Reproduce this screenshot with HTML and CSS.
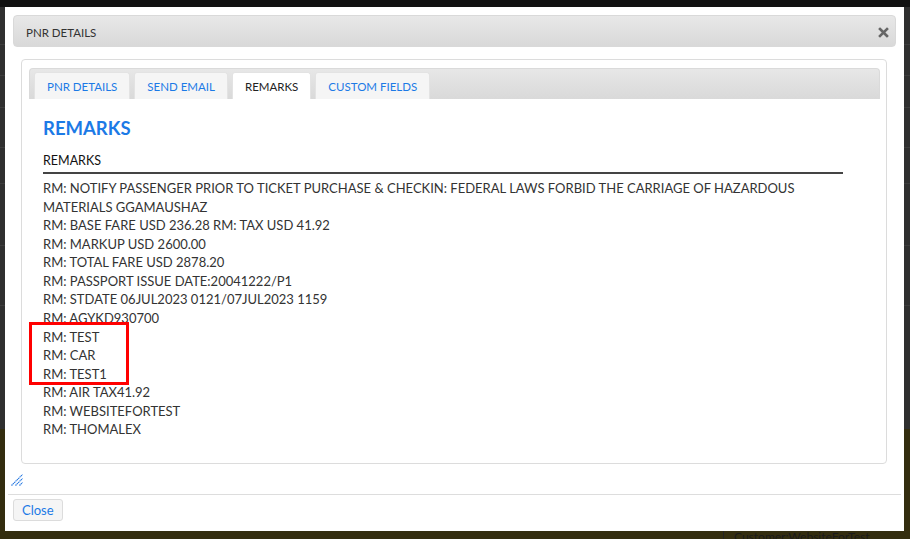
FILE: index.html
```html
<!DOCTYPE html>
<html>
<head>
<meta charset="utf-8">
<title>PNR Details</title>
<link rel="stylesheet" href="styles.css">
</head>
<body>
<div class="backdrop">
  <div class="bd-top"></div>
  <div class="bd-mid">
    <div class="bd-row r1"></div>
    <div class="bd-row r2"></div>
    <div class="bd-row r3"></div>
    <div class="bd-row r4"></div>
    <div class="bd-row r5"></div>
    <div class="bd-row r6"></div>
    <div class="bd-row r7"></div>
    <div class="bd-row r8"></div>
  </div>
  <div class="bd-bottom"><span class="bd-text">Customer:WebsiteForTest</span></div>
</div>

<div class="dialog">
  <div class="titlebar">
    <span class="title">PNR DETAILS</span>
    <svg class="close-x" width="11" height="11" viewBox="0 0 11 11"><path d="M2 2 L9 9 M9 2 L2 9" stroke="#666" stroke-width="2.6" stroke-linecap="square"/></svg>
  </div>

  <div class="content">
    <ul class="tabbar">
      <li class="tab">PNR DETAILS</li>
      <li class="tab">SEND EMAIL</li>
      <li class="tab active">REMARKS</li>
      <li class="tab">CUSTOM FIELDS</li>
    </ul>
    <div class="panel">
      <h3 class="heading">REMARKS</h3>
      <div class="subheading">REMARKS</div>
      <div class="remarks">
        <div>RM: NOTIFY PASSENGER PRIOR TO TICKET PURCHASE &amp; CHECKIN: FEDERAL LAWS FORBID THE CARRIAGE OF HAZARDOUS MATERIALS GGAMAUSHAZ</div>
        <div>RM: BASE FARE USD 236.28 RM: TAX USD 41.92</div>
        <div>RM: MARKUP USD 2600.00</div>
        <div>RM: TOTAL FARE USD 2878.20</div>
        <div>RM: PASSPORT ISSUE DATE:20041222/P1</div>
        <div>RM: STDATE 06JUL2023 0121/07JUL2023 1159</div>
        <div>RM: AGYKD930700</div>
        <div class="highlight">
          <div>RM: TEST</div>
          <div>RM: CAR</div>
          <div>RM: TEST1</div>
        </div>
        <div>RM: AIR TAX41.92</div>
        <div>RM: WEBSITEFORTEST</div>
        <div>RM: THOMALEX</div>
      </div>
    </div>
  </div>

  <div class="resize-row">
    <svg class="resize" width="12" height="12" viewBox="0 0 12 12">
      <path d="M0.5 11.5 L11.5 0.5 M4.5 11.5 L11.5 4.5 M8.5 11.5 L11.5 8.5" stroke="#1f74e0" stroke-width="1.1" stroke-dasharray="1.4 0.5" fill="none"/>
    </svg>
  </div>

  <div class="footer">
    <button class="btn">Close</button>
  </div>
</div>
</body>
</html>
```

FILE: styles.css
```css
html, body {
  margin: 0;
  padding: 0;
}
body {
  width: 910px;
  height: 539px;
  overflow: hidden;
  position: relative;
  font-family: Lato, "Open Sans", "Liberation Sans", sans-serif;
  background: #2f2f2f;
}

/* backdrop */
.backdrop {
  display: flex;
  flex-direction: column;
  height: 539px;
}
.bd-top {
  height: 7px;
  background: #111111;
}
.bd-mid {
  height: 422px;
  background: #2f2f2f;
  display: flex;
  flex-direction: column;
}
.bd-row {
  border-bottom: 1px solid #3d3d3d;
  box-sizing: border-box;
}
.r1 { height: 38px; }
.r2 { height: 31px; }
.r3 { height: 32px; }
.r4 { height: 40px; }
.r5 { height: 36px; }
.r6 { height: 62px; }
.r7 { height: 60px; }
.r8 { height: 83px; border-bottom: none; }
.bd-bottom {
  flex: 1;
  background: #332d0f;
  position: relative;
}
.bd-text {
  position: absolute;
  left: 723px;
  top: 100px;
  font-size: 12px;
  color: #1a1a1a;
  padding-left: 10px;
  border-left: 1px solid #222;
}

/* dialog */
.dialog {
  position: absolute;
  left: 5px;
  top: 7px;
  width: 899px;
  height: 524px;
  background: #fff;
  display: flex;
  flex-direction: column;
  box-sizing: border-box;
}
.titlebar {
  margin: 8px 8px 0 8px;
  height: 32px;
  box-sizing: border-box;
  border: 1px solid #d9d9d9;
  border-radius: 4px;
  background: linear-gradient(#e8e8e8, #d9d9d9);
  display: flex;
  align-items: center;
  justify-content: space-between;
  padding: 2px 6px 0 12px;
}
.title {
  font-size: 11.5px;
  color: #333;
}
.close-x {
  display: block;
}

.content {
  margin: 12px 17px 0 16px;
  height: 405px;
  box-sizing: border-box;
  border: 1px solid #dcdcdc;
  border-radius: 4px;
  padding: 8px 6px 0 7px;
}
.tabbar {
  list-style: none;
  margin: 0;
  height: 31px;
  box-sizing: border-box;
  border: 1px solid #dadada;
  border-bottom: none;
  border-radius: 4px 4px 0 0;
  background: linear-gradient(#e7e7e7, #d9d9d9);
  padding: 3px 0 0 4px;
  display: flex;
  align-items: flex-end;
  gap: 4px;
}
.tab {
  height: 27px;
  box-sizing: border-box;
  padding: 0 12px;
  display: flex;
  align-items: center;
  font-size: 11.5px;
  color: #1c7ae6;
  background: #f5f5f5;
  border: 1px solid #e3e3e3;
  border-bottom: none;
  border-radius: 3px 3px 0 0;
}
.tab.active {
  background: #fff;
  color: #222;
}

.panel {
  padding: 0 14px;
}
.heading {
  margin: 17px 0 0 0;
  font-size: 18.5px;
  line-height: 24px;
  font-weight: 700;
  color: #1c7ae6;
}
.subheading {
  margin-top: 13px;
  width: 800px;
  font-size: 12.5px;
  line-height: 16px;
  color: #111;
  padding-bottom: 3px;
  border-bottom: 2px solid #444;
}
.remarks {
  margin-top: 5px;
  width: 800px;
  font-size: 13px;
  line-height: 18.57px;
  color: #333;
}
.highlight {
  position: relative;
}
.highlight::after {
  content: "";
  position: absolute;
  left: -14px;
  top: -6px;
  width: 100px;
  height: 63px;
  box-sizing: border-box;
  border: 3px solid #ff0000;
}

.resize-row {
  height: 30px;
  padding: 10px 0 0 6px;
  box-sizing: border-box;
}
.resize {
  display: block;
}

.footer {
  margin: 0 3px;
  border-top: 1px solid #dddddd;
  padding: 4px 5px;
}
.btn {
  display: block;
  height: 22px;
  padding: 0 8px;
  font-family: Lato, "Open Sans", "Liberation Sans", sans-serif;
  font-size: 13px;
  color: #1c7ae6;
  background: #f5f5f5;
  border: 1px solid #dcdcdc;
  border-radius: 3px;
}
```
